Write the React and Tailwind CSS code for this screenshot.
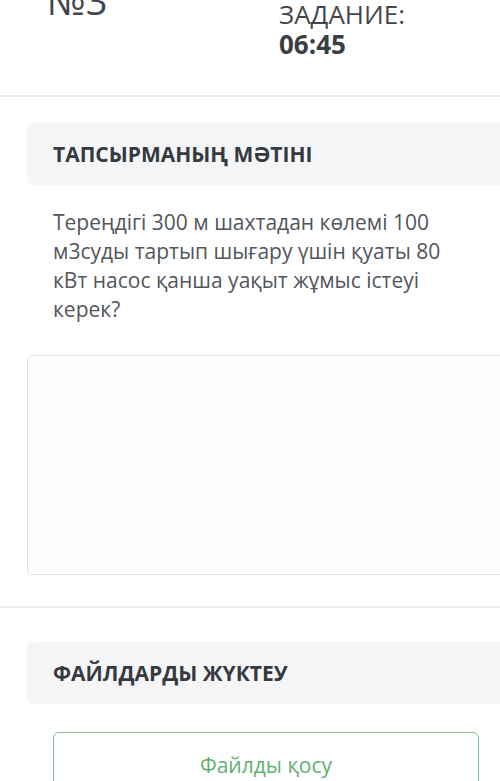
export default function App() {
  return (
    <div className="w-[500px] h-[781px] overflow-hidden bg-white font-['Open_Sans',sans-serif]">
      {/* top bar */}
      <div className="h-[95px] flex">
        <div className="w-[279px] pl-[47px]">
          <div className="mt-[-19px] text-[38px] leading-[38px] text-[#43474c]">№3</div>
        </div>
        <div className="flex flex-col mt-[-1px] text-[26px] leading-[30px] text-[#43474c]">
          <span>ЗАДАНИЕ:</span>
          <span className="font-bold text-[#3a3e43]">06:45</span>
        </div>
      </div>
      <div className="h-[2px] bg-[#ebebeb] w-full" />

      <div className="ml-[27px] w-[478px]">
        <div className="mt-[26px] h-[62px] bg-[#f4f5f7] rounded-l-[6px] flex items-center pl-[26px]">
          <span className="text-[21px] leading-[28px] font-bold text-[#363a3f]">ТАПСЫРМАНЫҢ МӘТІНІ</span>
        </div>
        <div className="mt-[23px] pl-[26px] w-[430px] text-[21px] leading-[29px] text-[#51565c]">
          Тереңдігі 300 м шахтадан көлемі 100 м3суды тартып шығару үшін қуаты 80 кВт насос қанша уақыт жұмыс істеуі керек?
        </div>
        <div className="mt-[31px] h-[220px] border border-[#e2e2e2] rounded-[5px] bg-[#fefefe]" />
      </div>

      <div className="mt-[31px] h-[2px] bg-[#ebebeb] w-full" />

      <div className="ml-[27px] w-[478px]">
        <div className="mt-[34px] h-[62px] bg-[#f4f5f7] rounded-l-[6px] flex items-center pl-[26px]">
          <span className="text-[21px] leading-[28px] font-bold text-[#363a3f]">ФАЙЛДАРДЫ ЖҮКТЕУ</span>
        </div>
        <div className="mt-[28px] px-[26px]">
          <div className="h-[66px] border-[1.5px] border-[#80c18c] rounded-[6px] flex items-center justify-center">
            <span className="text-[21px] leading-[28px] text-[#62b070]">Файлды қосу</span>
          </div>
        </div>
      </div>
    </div>
  );
}
